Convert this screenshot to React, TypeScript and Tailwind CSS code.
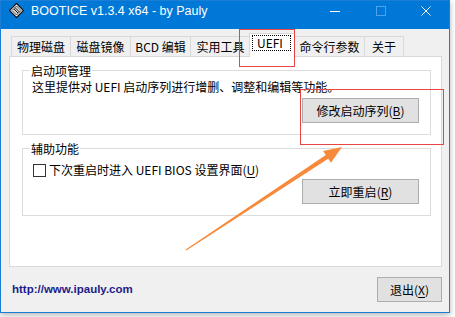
import React from "react";

const ui = "font-['Noto_Sans_CJK_SC','Noto_Sans',sans-serif]";

function AppIcon() {
  return (
    <svg width="15" height="15" viewBox="0 0 15 15" className="shrink-0">
      <polygon points="7.5,0.5 14.5,7.5 7.5,14.5 0.5,7.5" fill="#ffffff" stroke="#111" strokeWidth="1.2" />
      <polygon points="7.5,3 12,7.5 7.5,12 3,7.5" fill="#d9d9d9" stroke="#222" strokeWidth="0.8" />
      <line x1="5" y1="6" x2="9" y2="10" stroke="#111" strokeWidth="1" />
      <line x1="6" y1="4.6" x2="10.4" y2="9" stroke="#111" strokeWidth="1" />
    </svg>
  );
}

function Mn({ k }: { k: string }) {
  return (
    <span>
      (<span className="underline underline-offset-2">{k}</span>)
    </span>
  );
}

function Btn({ children, className = "" }: { children: React.ReactNode; className?: string }) {
  return (
    <div
      className={
        "h-[25px] flex items-center justify-center bg-[#e1e1e1] border border-[#adadad] text-[12px] text-black leading-[16px] " +
        className
      }
    >
      {children}
    </div>
  );
}

function Tab({ label, w, className = "" }: { label: string; w: string; className?: string }) {
  return (
    <div
      className={
        "h-[20px] flex items-center justify-center border-l border-t border-[#d9d9d9] bg-[#f0f0f0] text-[12px] leading-[16px] " +
        w +
        " " +
        className
      }
    >
      {label}
    </div>
  );
}

export default function App() {
  return (
    <div className={"relative w-[455px] h-[317px] bg-white overflow-hidden text-black " + ui}>
      <div className="w-[450px] h-[313px] border border-[#1a7fd4] bg-[#f0f0f0] flex flex-col shadow-[0_2px_6px_rgba(0,0,0,0.3)]">
        {/* title bar */}
        <div className="h-[28px] bg-[#0078d7] flex items-start shrink-0">
          <div className="pl-[8px] pt-[2px]">
            <AppIcon />
          </div>
          <div className="ml-[7px] pt-[2px] text-white text-[12.5px] leading-[16px] font-['Liberation_Sans',Arial,sans-serif]">
            BOOTICE v1.3.4 x64 - by Pauly
          </div>
          <div className="ml-auto flex">
            <div className="w-[46px] h-[28px] flex justify-center pt-[10px]">
              <div className="w-[10px] h-px bg-white ml-[2px]" />
            </div>
            <div className="w-[46px] h-[28px] flex justify-center pt-[5px]">
              <div className="w-[10px] h-[10px] border border-[#4fa3e8] ml-[1px]" />
            </div>
            <div className="w-[46px] h-[28px] flex justify-center pt-[5px]">
              <svg width="10" height="10" viewBox="0 0 10 10">
                <path d="M0.5 0.5L9.5 9.5M9.5 0.5L0.5 9.5" stroke="#fff" strokeWidth="1" />
              </svg>
            </div>
          </div>
        </div>

        {/* tabs */}
        <div className="mt-[4px] ml-[10px] h-[23px] flex items-end">
          <Tab label="物理磁盘" w="w-[59px]" />
          <Tab label="磁盘镜像" w="w-[60px]" />
          <Tab label="BCD 编辑" w="w-[60px]" />
          <Tab label="实用工具" w="w-[60px]" />
          <div className="relative z-10 -ml-[1px] -mb-px w-[46px] h-[24px] bg-white border-l border-t border-r border-[#d9d9d9] pt-[1px] pl-[2px]">
            <div className="w-[39px] h-[16px] border border-dotted border-black flex items-center pl-[4px] text-[12px] leading-[14px]">
              UEFI
            </div>
          </div>
          <Tab label="命令行参数" w="w-[70px]" className="-ml-[1px]" />
          <Tab label="关于" w="w-[40px]" className="border-r" />
        </div>

        {/* panel */}
        <div className="ml-[8px] w-[433px] h-[211px] bg-white border border-[#d9d9d9] pl-[12px] pt-[13px]">
          <div className="relative w-[409px] h-[65px] border border-[#dcdcdc] flex flex-col">
            <div className="absolute left-[7px] top-[-8px] bg-white px-px text-[12px] leading-[16px]">启动项管理</div>
            <div className="pl-[9px] pt-[8px] text-[12px] leading-[16px]">
              这里提供对 UEFI 启动序列进行增删、调整和编辑等功能。
            </div>
            <Btn className="self-end mr-[11px] mt-[3px] w-[117px]">
              修改启动序列<Mn k="B" />
            </Btn>
          </div>

          <div className="relative mt-[13px] w-[409px] h-[68px] border border-[#dcdcdc] flex flex-col">
            <div className="absolute left-[7px] top-[-8px] bg-white px-px text-[12px] leading-[16px]">辅助功能</div>
            <div className="pl-[10px] pt-[14px] h-[28px] flex items-end">
              <div className="h-[14px] flex items-center">
                <div className="w-[13px] h-[13px] border border-[#333] bg-white" />
                <div className="ml-[3px] text-[12px] leading-[16px]">
                  下次重启时进入 UEFI BIOS 设置界面<Mn k="U" />
                </div>
              </div>
            </div>
            <Btn className="self-end mr-[11px] mt-[2px] w-[117px]">
              立即重启<Mn k="R" />
            </Btn>
          </div>
        </div>

        {/* footer */}
        <div className="mt-[10px] h-[25px] pl-[11px] pr-[7px] flex items-center justify-between">
          <div className="text-[11.5px] font-bold text-[#1d1d8a] font-['Liberation_Sans',Arial,sans-serif]">
            http://www.ipauly.com
          </div>
          <Btn className="w-[65px]">
            退出<Mn k="X" />
          </Btn>
        </div>
      </div>

      {/* annotations */}
      <div className="absolute left-[239px] top-[29px] w-[56px] h-[38px] border border-[#e84545] z-20" />
      <div className="absolute left-[300px] top-[89px] w-[144px] h-[56px] border border-[#e84545] z-20" />
      <svg className="absolute inset-0 z-20 pointer-events-none" width="455" height="317" viewBox="0 0 455 317">
        <polygon
          points="185.7,249.6 325.8,155.1 323.1,151.1 342,147 330.9,162.7 328.2,158.7 186.3,250.4"
          fill="#f78a3a"
        />
      </svg>
    </div>
  );
}
